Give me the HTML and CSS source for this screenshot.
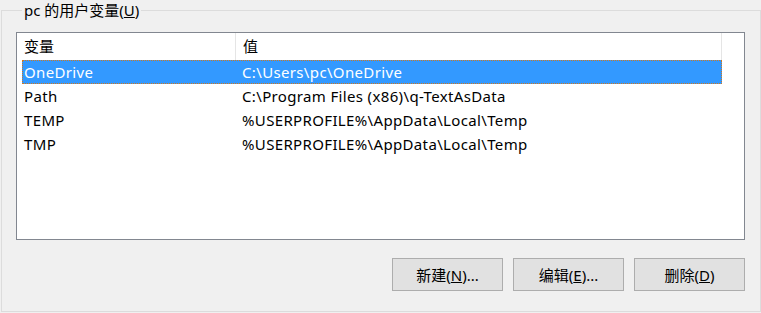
FILE: index.html
```html
<!DOCTYPE html>
<html lang="zh-CN">
<head>
  <meta charset="UTF-8">
  <title>环境变量</title>
  <link rel="stylesheet" href="styles.css">
</head>
<body>

  <fieldset class="group">
    <legend>pc 的用户变量(<u>U</u>)</legend>

    <div class="list-view">
      <div class="list-head">
        <div class="col col-name">变量</div>
        <div class="col col-value">值</div>
      </div>
      <div id="varRows"></div>
    </div>

    <div class="buttons">
      <button class="btn">新建(<u>N</u>)...</button>
      <button class="btn">编辑(<u>E</u>)...</button>
      <button class="btn">删除(<u>D</u>)</button>
    </div>
  </fieldset>

  <script>
    const vars = [
      { name: 'OneDrive', value: 'C:\\Users\\pc\\OneDrive' },
      { name: 'Path', value: 'C:\\Program Files (x86)\\q-TextAsData' },
      { name: 'TEMP', value: '%USERPROFILE%\\AppData\\Local\\Temp' },
      { name: 'TMP', value: '%USERPROFILE%\\AppData\\Local\\Temp' }
    ];
    let selected = 0;

    // Pintar las filas de variables
    function loadRows() {
      const rows = document.getElementById('varRows');
      rows.innerHTML = '';
      vars.forEach((v, index) => {
        const row = document.createElement('div');
        row.className = 'list-row' + (index === selected ? ' selected' : '');
        row.innerHTML = `
          <div class="col col-name">${v.name}</div>
          <div class="col col-value">${v.value}</div>
        `;
        row.onclick = () => { selected = index; loadRows(); };
        rows.appendChild(row);
      });
    }

    loadRows();
  </script>
</body>
</html>
```

FILE: styles.css
```css
body {
  font-family: "Noto Sans", "Noto Sans CJK SC", sans-serif;
  font-size: 15px;
  background-color: #f0f0f0;
  color: #000;
  margin: 0;
}

.group {
  box-sizing: border-box;
  width: 760px;
  height: 312px;
  margin: 0 0 0 1px;
  padding: 12px 15px 0 14px;
  border: 1px solid #dcdcdc;
  border-radius: 0;
}

.group legend {
  padding: 0 2px;
  margin-left: 6px;
  line-height: 20px;
}

.list-view {
  box-sizing: border-box;
  height: 208px;
  background-color: white;
  border: 1px solid #828790;
  padding: 0 22px 0 5px;
}

.list-head, .list-row {
  display: flex;
  white-space: nowrap;
}

.list-head {
  height: 27px;
  line-height: 27px;
}

.list-head .col {
  border-right: 1px solid #e5e5e5;
}

.list-row {
  box-sizing: border-box;
  height: 24px;
  line-height: 22px;
  letter-spacing: 0.35px;
  border: 1px solid transparent;
}

.list-row.selected {
  background-color: #3399ff;
  color: white;
  border: 1px dotted #d0781e;
}

.col-name {
  width: 211px;
  padding-left: 2px;
}

.col-value {
  flex: 1;
  padding-left: 7px;
}

.list-row .col-name { padding-left: 1px; }
.list-row .col-value { padding-left: 7px; }

.buttons {
  display: flex;
  justify-content: flex-end;
  gap: 10px;
  margin-top: 18px;
}

.btn {
  box-sizing: border-box;
  width: 111px;
  height: 33px;
  font-family: inherit;
  font-size: 15px;
  color: #000;
  background-color: #e1e1e1;
  border: 1px solid #adadad;
  border-radius: 0;
  padding: 0;
}
```
